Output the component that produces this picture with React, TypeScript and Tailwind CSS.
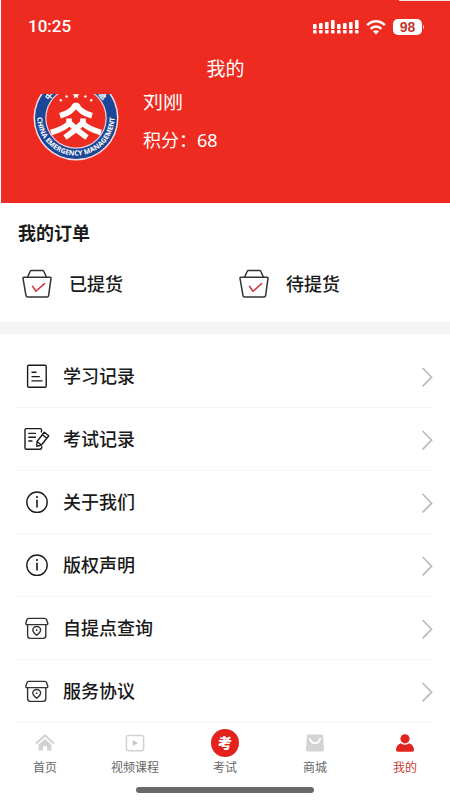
import type { ReactNode } from "react";

const stroke = {
  fill: "none",
  stroke: "currentColor",
  strokeLinecap: "round" as const,
  strokeLinejoin: "round" as const,
};

function Signal() {
  const heights = [5, 6, 7, 9, 5, 6, 7, 9];
  return (
    <svg viewBox="0 0 46 16" className="h-4 w-[46px]" fill="#fff" aria-label="信号">
      {heights.map((h, i) => {
        const x = i * 6;
        return (
          <g key={i}>
            <rect x={x} y={10 - h} width="3.6" height={h} rx="0.8" />
            <rect x={x} y="11" width="3.6" height="3.6" rx="0.8" />
          </g>
        );
      })}
    </svg>
  );
}

function Wifi() {
  return (
    <svg viewBox="0 0 20 16" className="h-4 w-5" fill="none" stroke="#fff" strokeWidth="2.5" aria-label="无线网络">
      <path d="M1.2 6.2C6.2 0.9 13.8 0.9 18.8 6.2" />
      <path d="M4.6 9.8C7.7 6.7 12.3 6.7 15.4 9.8" />
      <path d="M10 15.4L7 12.3C8.7 10.8 11.3 10.8 13 12.3Z" fill="#fff" stroke="none" />
    </svg>
  );
}

function Emblem() {
  return (
    <svg viewBox="0 0 86 86" className="-mt-[19px] h-[86px] w-[86px] shrink-0" aria-label="中国应急管理">
      <defs>
        <path id="lower-arc" d="M4.4 42A38.6 38.6 0 0 0 81.6 42" />
        <path id="upper-arc" d="M11 43A32 32 0 0 1 75 43" />
      </defs>
      <circle cx="43" cy="43" r="42.5" fill="#f3dfe8" />
      <circle cx="43" cy="43" r="41" fill="#1c4796" />
      <circle cx="43" cy="43" r="30.8" fill="#e5d3e4" />
      <circle cx="43" cy="43" r="29.6" fill="#ee2b20" />
      <text fill="#fff" className="font-['Open_Sans','Noto_Sans',sans-serif] text-[7px] font-bold">
        <textPath href="#lower-arc" startOffset="50%" textAnchor="middle">
          CHINA EMERGENCY MANAGEMENT
        </textPath>
      </text>
      <text fill="#fff" className="font-['Noto_Sans_CJK_SC',sans-serif] text-[8px] font-bold">
        <textPath href="#upper-arc" startOffset="18%">中</textPath>
      </text>
      <text fill="#fff" className="font-['Noto_Sans_CJK_SC',sans-serif] text-[8px] font-bold">
        <textPath href="#upper-arc" startOffset="74%">急</textPath>
      </text>
      <g fill="#fff">
        <path d="M43 17l1 2.2 2.5.2-1.9 1.6.6 2.4-2.2-1.3-2.2 1.3.6-2.4-1.9-1.6 2.5-.2z" />
        <circle cx="27.8" cy="25.2" r="1.2" />
        <circle cx="33.6" cy="21.4" r="1.2" />
        <circle cx="52.4" cy="21.4" r="1.2" />
        <circle cx="58.2" cy="25.2" r="1.2" />
      </g>
      <g fill="none" stroke="#fff" strokeWidth="5.6" strokeLinejoin="round">
        <path d="M27 40.8C33 39 39.5 36 42 30.5H44C46.500 36 53 39 59 40.800" />
        <path d="M36 43.500V48C34 52 26 55 18 57.500" />
        <path d="M50 43.500V48C52 52 60 55 68 57.500" />
        <path d="M36 47.500C40 51.500 46 57 54 62.500" />
        <path d="M50 47.500C46 51.500 40 57 32 62.500" />
      </g>
    </svg>
  );
}

function BasketIcon() {
  return (
    <svg viewBox="0 0 30 30" className="h-[30px] w-[30px] shrink-0 text-[#333]" {...stroke} strokeWidth="1.5">
      <path d="M5.5 8.300L8.200 2.200Q8.500 1.400 9.400 1.400H20.600Q21.500 1.400 21.800 2.200L24.500 8.300" />
      <path d="M1.900 8.300H28.100Q29.200 8.300 29 9.400L26.600 26.600Q26.400 28 25 28H5.600Q4.200 28 4 26.600L1 9.400Q.8 8.300 1.900 8.300Z" />
      <path d="M10.500 17.300L14 22.300L22.500 14.600" stroke="#c8383a" />
    </svg>
  );
}

function DocIcon() {
  return (
    <svg viewBox="0 0 28 28" className="h-7 w-7 shrink-0" {...stroke} strokeWidth="1.4">
      <rect x="4.6" y="3.2" width="18.6" height="22" rx="1.2" />
      <path d="M9 10.3H13M9 14.6H16.3M9 18.9H19" />
    </svg>
  );
}

function ExamIcon() {
  return (
    <svg viewBox="0 0 28 28" className="h-7 w-7 shrink-0" {...stroke} strokeWidth="1.4">
      <path d="M18.5 7V4.8Q18.5 3.6 17.3 3.6H3.2Q2 3.6 2 4.8V23Q2 24.3 3.2 24.3H17Q18.8 24.3 18.8 21.6" />
      <path d="M5.8 8.4H12.4M5.8 12.2H12.4M5.8 16H9" />
      <path d="M21.3 7.3L25.8 10.7L18.4 20L13.8 21.4L14 16.5ZM19.4 9.8L23.8 13.2M14 16.5L18.4 20" />
    </svg>
  );
}

function InfoIcon() {
  return (
    <svg viewBox="0 0 28 28" className="h-7 w-7 shrink-0" {...stroke} strokeWidth="1.4">
      <circle cx="14" cy="14.2" r="10.2" />
      <path d="M14 12.4V19" strokeWidth="1.6" />
      <circle cx="14" cy="9" r="1.1" fill="currentColor" stroke="none" />
    </svg>
  );
}

function StoreIcon() {
  return (
    <svg viewBox="0 0 28 28" className="h-7 w-7 shrink-0 text-[#333]" {...stroke} strokeWidth="1.4">
      <path d="M5.6 4.4H21.8Q23 4.4 23.5 5.5L24.8 9.2Q25 10.6 23.6 10.6H4Q2.6 10.6 2.8 9.2L4 5.5Q4.4 4.4 5.6 4.4Z" />
      <path d="M4.6 10.6V21.6Q4.6 24.4 7.2 24.4H20.2Q22.8 24.4 22.8 21.6V10.6" />
      <path d="M13.7 21.2C11.2 19.2 9.8 17.900 9.800 16A3.900 3.500 0 0 1 17.600 16C17.600 17.900 16.200 19.200 13.700 21.200Z" />
      <circle cx="13.7" cy="16.2" r=".9" fill="currentColor" stroke="none" />
    </svg>
  );
}

function Chevron() {
  return (
    <svg viewBox="0 0 12 24" className="h-6 w-3 shrink-0" fill="none" stroke="#bbb" strokeWidth="1.7">
      <path d="M1.6 4L10.6 13.200L1.600 22.400" />
    </svg>
  );
}

function HomeIcon() {
  return (
    <svg viewBox="0 0 20 20" className="h-5 w-5">
      <path d="M1 10.6L10 2.4L19 10.6" fill="none" stroke="#d2d2d2" strokeWidth="2" />
      <path d="M3.6 11.6L10 6L16.4 11.6V17.6H12V13.2H8V17.6H3.6Z" fill="#d2d2d2" />
    </svg>
  );
}

function VideoIcon() {
  return (
    <svg viewBox="0 0 20 20" className="h-5 w-5">
      <rect x="1.4" y="2.4" width="17.2" height="15.4" rx="2" fill="none" stroke="#d2d2d2" strokeWidth="1.5" />
      <path d="M7.600 7L13 10L7.600 13Z" fill="#c6c6c6" />
    </svg>
  );
}

function BagIcon() {
  return (
    <svg viewBox="0 0 20 20" className="h-5 w-5">
      <path d="M2.8 1.6H17.2Q18 1.6 18.1 2.4L19 16.6Q19 18.6 17 18.6H3Q1 18.6 1 16.6L1.9 2.4Q2 1.6 2.8 1.6Z" fill="#d3d3d3" />
      <path d="M5 5.6C6 11.6 14 11.6 15 5.6" fill="none" stroke="#fff" strokeWidth="1.8" strokeLinecap="round" />
    </svg>
  );
}

function PersonIcon() {
  return (
    <svg viewBox="0 0 20 20" className="h-5 w-5" fill="#df251e">
      <circle cx="10" cy="5.8" r="4.6" />
      <path d="M6 10.2Q10 13.4 14 10.2Q18.8 12 19 17Q19 18.8 17.4 18.8H2.6Q1 18.8 1 17Q1.2 12 6 10.2Z" />
    </svg>
  );
}

const menu: { label: string; icon: ReactNode }[] = [
  { label: "学习记录", icon: <DocIcon /> },
  { label: "考试记录", icon: <ExamIcon /> },
  { label: "关于我们", icon: <InfoIcon /> },
  { label: "版权声明", icon: <InfoIcon /> },
  { label: "自提点查询", icon: <StoreIcon /> },
  { label: "服务协议", icon: <StoreIcon /> },
];

const tabs: { label: string; icon: ReactNode; active?: boolean }[] = [
  { label: "首页", icon: <HomeIcon /> },
  { label: "视频课程", icon: <VideoIcon /> },
  {
    label: "考试",
    icon: (
      <span className="flex h-7 w-7 items-center justify-center rounded-full bg-[#e3231b] text-sm font-black text-white">
        考
      </span>
    ),
  },
  { label: "商城", icon: <BagIcon /> },
  { label: "我的", icon: <PersonIcon />, active: true },
];

export default function App() {
  return (
    <div className="flex min-h-screen flex-col bg-white font-['Noto_Sans','Noto_Sans_CJK_SC',sans-serif] text-[#1a1a1a]">
      <header className="relative ml-px bg-[#ee2b20] text-white">
        <span className="absolute top-0 right-0 h-px w-[51px] bg-[#f6e4e2]" />
        <div className="flex h-[54px] items-center justify-between pr-[26px] pl-[27px]">
          <time className="font-[Roboto,sans-serif] text-[17px] font-medium">10:25</time>
          <div className="flex items-center gap-[7px]">
            <Signal />
            <Wifi />
            <div className="flex items-center">
              <span className="flex h-4 w-[29px] items-center justify-center rounded-[5px] bg-white font-['Liberation_Sans',sans-serif] text-sm font-bold text-[#c8362e]">
                98
              </span>
              <span className="ml-px h-1 w-px rounded-r bg-white/70" />
            </div>
          </div>
        </div>
        <h1 className="flex h-10 items-center justify-center pb-2.5 text-[19px] leading-7 font-normal">我的</h1>
        <section className="flex h-[109px] items-start gap-6 overflow-hidden pl-8">
          <Emblem />
          <div className="-mt-1.5">
            <p className="text-xl leading-7">刘刚</p>
            <p className="mt-2.5 text-lg leading-7">积分：68</p>
          </div>
        </section>
      </header>

      <section className="px-[18px] pt-4">
        <h2 className="text-lg leading-7 font-bold">我的订单</h2>
        <div className="grid grid-cols-2 pt-[22px] pb-[23px] pl-1">
          <button type="button" className="flex items-center gap-[17px] text-lg leading-7 font-medium">
            <BasketIcon />
            已提货
          </button>
          <button type="button" className="flex items-center gap-[17px] pl-3 text-lg leading-7 font-medium">
            <BasketIcon />
            待提货
          </button>
        </div>
      </section>

      <div className="h-3 bg-[#f5f5f5]" />

      <nav className="px-4 pt-[11px]" aria-label="菜单">
        {menu.map((item) => (
          <a
            key={item.label}
            href="#"
            className="flex h-[63px] items-center gap-3 border-b border-[#f6f6f6] pr-px pl-[7px] text-lg font-medium"
          >
            {item.icon}
            <span className="flex-1">{item.label}</span>
            <Chevron />
          </a>
        ))}
      </nav>

      <nav className="flex pt-[5px]" aria-label="底部导航">
        {tabs.map((tab) => (
          <button
            key={tab.label}
            type="button"
            className={
              tab.active
                ? "flex flex-1 flex-col items-center text-xs leading-5 text-[#c93a36]"
                : "flex flex-1 flex-col items-center text-xs leading-5 text-[#666]"
            }
          >
            <span className="flex h-[30px] items-center">{tab.icon}</span>
            {tab.label}
          </button>
        ))}
      </nav>
      <div className="mx-auto mt-[9px] mb-2 h-1.5 w-[178px] rounded-full bg-[#696969]" />
    </div>
  );
}
